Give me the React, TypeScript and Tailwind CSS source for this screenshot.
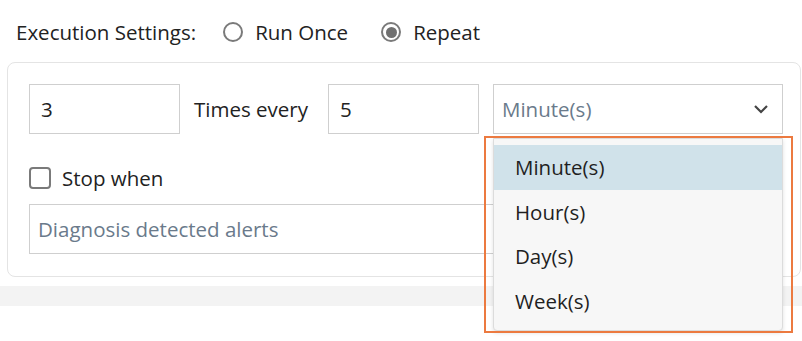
const units = ['Minute(s)', 'Hour(s)', 'Day(s)', 'Week(s)'];

function Radio({ checked }: { checked?: boolean }) {
  return (
    <span className="flex h-[20px] w-[20px] items-center justify-center rounded-full border-2 border-[#7a7a7a] bg-white">
      {checked && <span className="h-[11px] w-[11px] rounded-full bg-[#707070]" />}
    </span>
  );
}

export default function App() {
  return (
    <div
      className="relative h-[341px] w-[802px] overflow-hidden bg-white text-[20.5px] leading-[30px] text-[#222]"
      style={{ fontFamily: '"Open Sans", "Liberation Sans", sans-serif' }}
    >
      {/* execution mode */}
      <div className="flex h-[62px] items-center pl-[16px] pt-[2px]">
        <span>Execution Settings:</span>
        <label className="ml-[27px] flex items-center gap-[12px]">
          <Radio />
          <span>Run Once</span>
        </label>
        <label className="ml-[33px] flex items-center gap-[12px]">
          <Radio checked />
          <span>Repeat</span>
        </label>
      </div>

      {/* repeat settings */}
      <div className="ml-[7px] h-[215px] w-[794px] rounded-[8px] border border-[#e4e4e4] pl-[21px] pr-[17px] pt-[21px]">
        <div className="flex items-center">
          <div className="flex h-[50px] w-[151px] shrink-0 items-center border border-[#cfcfcf] px-[11px]">3</div>
          <span className="ml-[14px] w-[134px] shrink-0">Times every</span>
          <div className="flex h-[50px] w-[151px] shrink-0 items-center border border-[#cfcfcf] px-[11px]">5</div>
          <div className="ml-[14px] flex h-[50px] w-[290px] shrink-0 items-center justify-between border border-[#cfcfcf] pl-[8px] pr-[13px] text-[#6a7a8b]">
            <span>Minute(s)</span>
            <svg width="16" height="10" viewBox="0 0 16 10" fill="none">
              <polyline points="2,2 8,8 14,2" stroke="#444" strokeWidth="2.2" />
            </svg>
          </div>
        </div>

        <label className="mt-[29px] flex items-center gap-[11px]">
          <span className="h-[22px] w-[22px] rounded-[4px] border-2 border-[#7a7a7a] bg-white" />
          <span>Stop when</span>
        </label>

        <div className="mt-[11px] flex h-[50px] w-[754px] items-center border border-[#cfcfcf] px-[8px] text-[#6a7a8b]">
          Diagnosis detected alerts
        </div>
      </div>

      <div className="mt-[9px] h-[20px] w-full bg-[#f3f3f3]" />

      {/* open unit dropdown */}
      <div className="absolute left-[493px] top-[138px] h-[193px] w-[290px] rounded-b-[4px] border border-[#dcdcdc] bg-[#f7f7f7] pt-[6px] shadow-[0_2px_4px_rgba(0,0,0,0.12)]">
        {units.map((u, i) => (
          <div
            key={u}
            className={`flex h-[44.5px] items-center pl-[21px] text-[#1f1f1f] ${i === 0 ? 'bg-[#d0e2ea]' : ''}`}
          >
            {u}
          </div>
        ))}
      </div>
      <div className="pointer-events-none absolute left-[484px] top-[136px] h-[197px] w-[309px] border-2 border-[#ec7a40]" />
    </div>
  );
}
